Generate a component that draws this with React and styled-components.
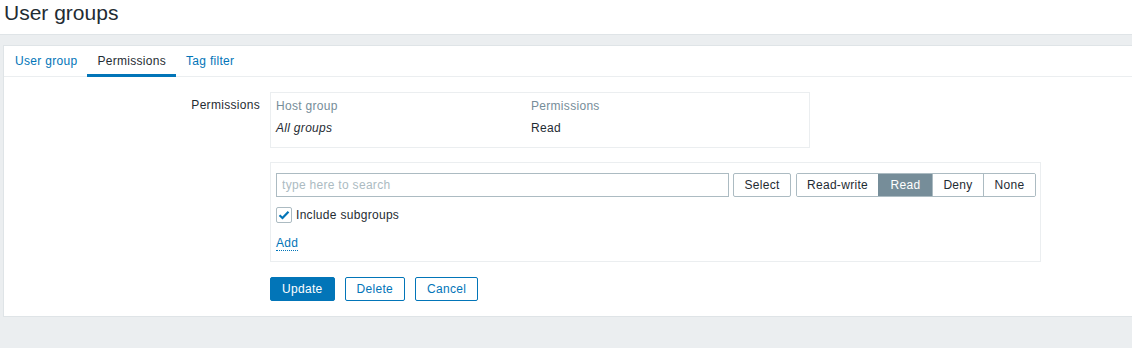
import styled, { createGlobalStyle } from "styled-components";

const GlobalStyle = createGlobalStyle`
  body {
    margin: 0;
    background: #ebeef0;
    font-family: "Liberation Sans", Arial, sans-serif;
    font-size: 12px;
    letter-spacing: 0.3px;
    color: #1f2c33;
  }
`;

const segments = [
  { label: "Read-write", width: 81 },
  { label: "Read", width: 54 },
  { label: "Deny", width: 51 },
  { label: "None", width: 52 },
];

const App = () => {
  return (
    <>
      <GlobalStyle />
      <Header>
        <h1>User groups</h1>
      </Header>
      <Panel>
        <TabList>
          <Tab>User group</Tab>
          <Tab active>Permissions</Tab>
          <Tab>Tag filter</Tab>
        </TabList>
        <Form>
          <Label>Permissions</Label>
          <TableBox>
            <Th>Host group</Th>
            <Th>Permissions</Th>
            <Td>
              <i>All groups</i>
            </Td>
            <Td>Read</Td>
          </TableBox>

          <span />
          <EditBox>
            <Row>
              <SearchInput placeholder="type here to search" />
              <PlainButton>Select</PlainButton>
              <Segmented>
                {segments.map((s) => (
                  <Segment
                    key={s.label}
                    active={s.label === "Read"}
                    style={{ width: s.width }}
                  >
                    {s.label}
                  </Segment>
                ))}
              </Segmented>
            </Row>
            <CheckRow>
              <Checkbox>
                <svg width="12" height="10" viewBox="0 0 12 10">
                  <path
                    d="M1.5 5.2 L4.5 8 L10.5 1.8"
                    fill="none"
                    stroke="#0275b8"
                    strokeWidth="2.2"
                  />
                </svg>
              </Checkbox>
              Include subgroups
            </CheckRow>
            <AddLink>Add</AddLink>
          </EditBox>

          <span />
          <Buttons>
            <Button primary>Update</Button>
            <Button>Delete</Button>
            <Button>Cancel</Button>
          </Buttons>
        </Form>
      </Panel>
    </>
  );
};

const Header = styled.header`
  height: 35px;
  box-sizing: border-box;
  background: #fff;
  border-bottom: 1px solid #dfe4e7;
  padding: 1px 4px 0;

  h1 {
    margin: 0;
    font-size: 21px;
    line-height: 24px;
    font-weight: normal;
    letter-spacing: 0;
    color: #1f2c33;
  }
`;

const Panel = styled.main`
  margin: 10px 0 0 3px;
  background: #fff;
  border: 1px solid #dfe4e7;
  border-right: none;
  padding-bottom: 15px;
`;

const TabList = styled.nav`
  display: flex;
  padding-left: 1px;
  border-bottom: 1px solid #ebeef0;
`;

const Tab = styled.a`
  height: 31px;
  box-sizing: border-box;
  padding: 2px 10px 0;
  line-height: 27px;
  margin-bottom: -1px;
  border-bottom: 3px solid ${(p) => (p.active ? "#0275b8" : "transparent")};
  color: ${(p) => (p.active ? "#1f2c33" : "#0275b8")};
  cursor: pointer;
`;

const Form = styled.div`
  display: grid;
  grid-template-columns: 256px auto;
  justify-content: start;
  column-gap: 10px;
  padding-top: 15px;
`;

const Label = styled.label`
  text-align: right;
  line-height: 24px;
  padding-top: 1px;
`;

const TableBox = styled.div`
  width: 540px;
  box-sizing: border-box;
  border: 1px solid #ebeef0;
  display: grid;
  grid-template-columns: 255px 1fr;
  padding-bottom: 10px;
  line-height: 14px;
`;

const Th = styled.div`
  padding: 6px 5px 4px;
  color: #768d99;
`;

const Td = styled.div`
  padding: 4px 5px 2px;
`;

const EditBox = styled.div`
  margin-top: 14px;
  width: 771px;
  box-sizing: border-box;
  border: 1px solid #ebeef0;
  padding: 10px 4px 10px 5px;
`;

const Row = styled.div`
  display: flex;
  align-items: center;
  height: 24px;

  & > * {
    flex-shrink: 0;
  }
`;

const SearchInput = styled.input`
  width: 453px;
  height: 24px;
  box-sizing: border-box;
  border: 1px solid #acbbc2;
  padding: 0 5px;
  font: inherit;
  letter-spacing: inherit;
  color: #1f2c33;
  outline: none;

  &::placeholder {
    color: #acbbc2;
  }
`;

const PlainButton = styled.button`
  margin-left: 4px;
  height: 24px;
  width: 58px;
  border: 1px solid #acbbc2;
  border-radius: 2px;
  background: #fff;
  font: inherit;
  letter-spacing: inherit;
  color: #1f2c33;
  padding: 0;
`;

const Segmented = styled.div`
  display: flex;
  margin-left: 5px;
  border: 1px solid #acbbc2;
  border-radius: 2px;
  overflow: hidden;
`;

const Segment = styled.span`
  box-sizing: border-box;
  height: 22px;
  line-height: 22px;
  text-align: center;
  border-left: 1px solid ${(p) => (p.active ? "#768d99" : "#acbbc2")};
  background: ${(p) => (p.active ? "#768d99" : "#fff")};
  color: ${(p) => (p.active ? "#fff" : "#1f2c33")};

  &:first-child {
    border-left: none;
  }
`;

const CheckRow = styled.label`
  display: flex;
  align-items: center;
  gap: 4px;
  margin-top: 10px;
  height: 16px;
  line-height: 16px;
`;

const Checkbox = styled.span`
  width: 16px;
  height: 16px;
  box-sizing: border-box;
  border: 1px solid #acbbc2;
  border-radius: 2px;
  display: flex;
  align-items: center;
  justify-content: center;
`;

const AddLink = styled.a`
  display: inline-block;
  margin-top: 13px;
  line-height: 14px;
  color: #0275b8;
  border-bottom: 1px dotted #0275b8;
  cursor: pointer;
`;

const Buttons = styled.div`
  display: flex;
  gap: 10px;
  margin-top: 15px;
`;

const Button = styled.button`
  height: 24px;
  padding: 0 11px;
  border: 1px solid #0275b8;
  border-radius: 2px;
  background: ${(p) => (p.primary ? "#0275b8" : "#fff")};
  color: ${(p) => (p.primary ? "#fff" : "#0275b8")};
  font: inherit;
  letter-spacing: inherit;
`;

export default App;
